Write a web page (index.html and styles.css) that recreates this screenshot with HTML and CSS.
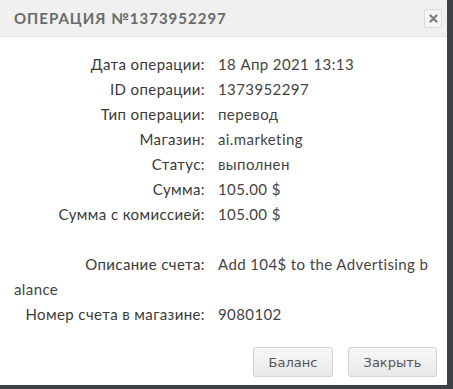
FILE: index.html
```html
<!DOCTYPE html>
<html lang="ru">
<head>
<meta charset="utf-8">
<link rel="stylesheet" href="styles.css">
</head>
<body>
<div class="modal">
  <div class="header">
    <div class="title">Операция №1373952297</div>
    <button class="close" aria-label="Закрыть">
      <svg width="9" height="9" viewBox="0 0 9 9"><path d="M1.5 1.5L7.5 7.5M7.5 1.5L1.5 7.5" stroke="#7a7a7a" stroke-width="2.2" stroke-linecap="round"/></svg>
    </button>
  </div>
  <div class="content">
    <div class="row"><span class="label">Дата операции:</span><span class="value">18 Апр 2021 13:13</span></div>
    <div class="row"><span class="label">ID операции:</span><span class="value">1373952297</span></div>
    <div class="row"><span class="label">Тип операции:</span><span class="value">перевод</span></div>
    <div class="row"><span class="label">Магазин:</span><span class="value">ai.marketing</span></div>
    <div class="row"><span class="label">Статус:</span><span class="value">выполнен</span></div>
    <div class="row"><span class="label">Сумма:</span><span class="value">105.00 $</span></div>
    <div class="row"><span class="label">Сумма с комиссией:</span><span class="value">105.00 $</span></div>
    <div class="row spacer"></div>
    <div class="row"><span class="label">Описание счета:</span><span class="value">Add 104$ to the Advertising balance</span></div>
    <div class="row"><span class="label">Номер счета в магазине:</span><span class="value">9080102</span></div>
  </div>
  <div class="footer">
    <button class="btn">Баланс</button>
    <button class="btn">Закрыть</button>
  </div>
</div>
</body>
</html>
```
FILE: styles.css
```css
html, body {
  margin: 0;
  padding: 0;
}
body {
  background: #3d4247;
  width: 453px;
  height: 389px;
  overflow: hidden;
}
.modal {
  width: 447px;
  height: 385px;
  background: #ffffff;
  display: flex;
  flex-direction: column;
}
.header {
  height: 36px;
  background: #f0f0f0;
  border-bottom: 1px solid #e2e2e2;
  display: flex;
  align-items: center;
  justify-content: space-between;
  padding: 0 5px 0 14px;
}
.title {
  font-family: "Lato", "Liberation Sans", sans-serif;
  font-weight: 700;
  font-size: 15px;
  letter-spacing: 1px;
  text-transform: uppercase;
  color: #6a6a6a;
}
.close {
  width: 18px;
  height: 19px;
  padding: 0;
  border: 1px solid #dcdcdc;
  background: #f5f5f5;
  border-radius: 2px;
  display: flex;
  align-items: center;
  justify-content: center;
}
.content {
  padding: 15px 14px 0 14px;
  font-family: "Lato", "Liberation Sans", sans-serif;
  font-size: 15px;
  letter-spacing: 0.4px;
  color: #333333;
  flex: 1;
}
.row {
  line-height: 25px;
  word-break: break-all;
}
.spacer {
  height: 25px;
}
.label {
  display: inline-block;
  width: 191px;
  text-align: right;
  margin-right: 13px;
  color: #3a3a3a;
}
.value {
  color: #444444;
}
.footer {
  display: flex;
  justify-content: flex-end;
  gap: 15px;
  padding: 0 10px 8px 0;
}
.btn {
  height: 30px;
  padding: 0 12px;
  min-width: 80px;
  font-family: "DejaVu Sans", "Liberation Sans", sans-serif;
  font-size: 13px;
  color: #555555;
  background: linear-gradient(#f8f8f8, #e8e8e8);
  border: 1px solid #d2d2d2;
  border-radius: 3px;
}
.btn + .btn {
  min-width: 89px;
}
```
